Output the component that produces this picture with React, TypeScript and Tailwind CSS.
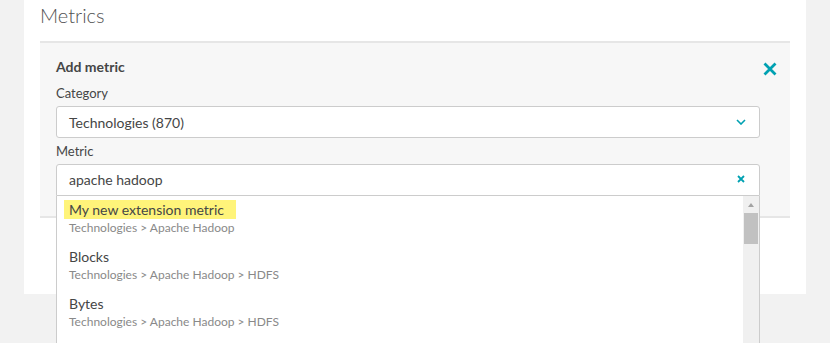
const ITEMS = [
  { title: 'My new extension metric', path: 'Technologies > Apache Hadoop', highlight: true },
  { title: 'Blocks', path: 'Technologies > Apache Hadoop > HDFS' },
  { title: 'Bytes', path: 'Technologies > Apache Hadoop > HDFS' },
];

export default function App() {
  return (
    <div className="relative h-[343px] overflow-hidden bg-[#f2f2f2] text-[#454646]" style={{ fontFamily: 'Lato, "Open Sans", sans-serif' }}>
      <div className="ml-[24px] h-[294px] w-[782px] bg-white px-[16px]">
        {/* section title */}
        <h2 className="pt-[3px] text-[20px] font-light leading-[24px] text-[#525252]">Metrics</h2>

        {/* add metric panel */}
        <div className="relative mt-[14px] border-y-2 border-[#e6e6e6] bg-[#f7f7f7] pb-[20px] pl-[16px] pr-[30px] pt-[14px]">
          <h3 className="text-[14px] font-bold leading-[20px]">Add metric</h3>
          <button className="absolute right-[13px] top-[19px] text-[#00a1b2]">
            <svg width="14" height="14" viewBox="0 0 14 14" fill="none" stroke="currentColor" strokeWidth="2.8">
              <path d="M1.5 1.5l11 11M12.5 1.5l-11 11" />
            </svg>
          </button>

          <label className="mt-[8px] block text-[13px] leading-[16px]">Category</label>
          <div className="mt-[5px] flex h-[32px] items-center justify-between rounded-[3px] border border-[#cccccc] bg-white pl-[12px] pr-[13px] text-[14px]">
            <span>Technologies (870)</span>
            <svg width="10" height="6" viewBox="0 0 10 6" fill="none" stroke="#00a1b2" strokeWidth="1.6">
              <path d="M1 1l4 4 4-4" />
            </svg>
          </div>

          <label className="mt-[5px] block text-[13px] leading-[16px]">Metric</label>
          <div className="relative mt-[5px]">
            <div className="flex h-[32px] items-center justify-between rounded-t-[3px] border border-[#cccccc] bg-white pb-[2px] pl-[12px] pr-[14px] text-[14px]">
              <span>apache hadoop</span>
              <svg width="8" height="8" viewBox="0 0 8 8" fill="none" stroke="#00a1b2" strokeWidth="1.8">
                <path d="M1 1l6 6M7 1l-6 6" />
              </svg>
            </div>

            {/* suggestion dropdown */}
            <div className="absolute left-0 right-0 top-full z-10 h-[160px] overflow-hidden border-x border-[#cccccc] bg-white">
              {ITEMS.map((item) => (
                <div key={item.title} className="pb-[7px] pl-[12px] pt-[5px]">
                  <div className="text-[14px] leading-[18px]">
                    {item.highlight ? (
                      <span className="-ml-[5px] bg-[#fff47a] py-[1px] pl-[5px] pr-[12px]">{item.title}</span>
                    ) : (
                      item.title
                    )}
                  </div>
                  <div className="mt-[1px] text-[12px] leading-[16px] text-[#898989]">{item.path}</div>
                </div>
              ))}
              <div className="absolute bottom-0 right-0 top-0 w-[16px] bg-[#f0f0f0]">
                <div className="mx-auto mt-[7px] h-0 w-0 border-x-[3.5px] border-b-[4px] border-x-transparent border-b-[#a3a3a3]" />
                <div className="mx-auto mt-[6px] h-[31px] w-[14px] bg-[#c1c1c1]" />
              </div>
            </div>
          </div>
        </div>
      </div>
    </div>
  );
}
